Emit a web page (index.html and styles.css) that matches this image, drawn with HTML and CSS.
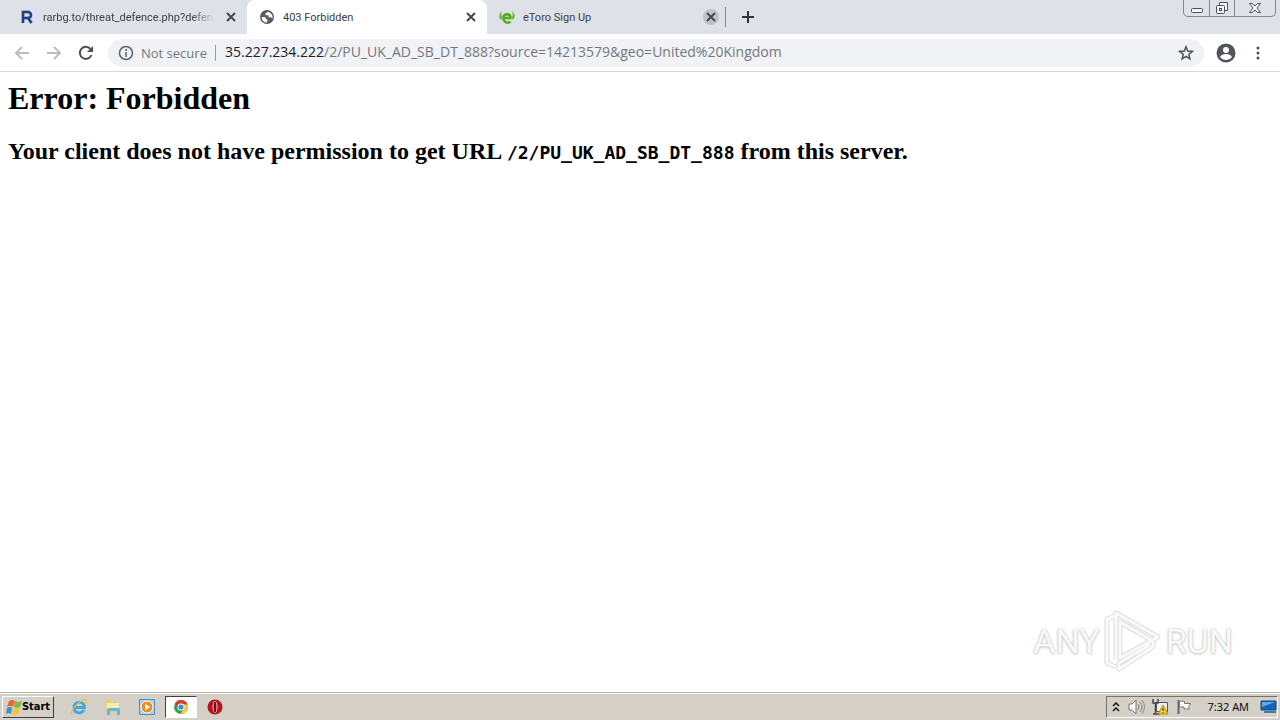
FILE: index.html
```html
<!DOCTYPE html>
<html lang="en">
<head>
<meta charset="utf-8">
<title>403 Forbidden</title>
<link rel="stylesheet" href="styles.css">
</head>
<body>
<header class="tabstrip">
  <div class="tab">
    <svg class="favicon" viewBox="0 0 16 16"><path d="M4 14V3h5a3 3 0 0 1 0 6H5m4 0 4 5" fill="none" stroke="#b8d2f2" stroke-width="4"/><path d="M4 14V3h5a3 3 0 0 1 0 6H5m4 0 3.500 5" fill="none" stroke="#263f7a" stroke-width="2.500"/></svg>
    <span class="tab-title faded">rarbg.to/threat_defence.php?defen</span>
    <button class="close" aria-label="Close tab"><svg viewBox="0 0 16 16"><path d="m4 4 8 8m0-8-8 8"/></svg></button>
  </div>
  <div class="tab active">
    <svg class="favicon" viewBox="0 0 16 16"><circle cx="8" cy="8" r="7" fill="#575b60"/><path d="M2.500 8.500c2-.8 4-.5 4.500 1 .5 1 1.500.6 1.500 2L8 13.500C5 13.500 3 11.500 2.500 8.500zM9 2.800 6.500 4.500v1.800h3v2h2.500l1.500 1.500c.5-3-.8-5.800-4.500-7z" fill="#fff"/></svg>
    <span class="tab-title">403 Forbidden</span>
    <button class="close" aria-label="Close tab"><svg viewBox="0 0 16 16"><path d="m4 4 8 8m0-8-8 8"/></svg></button>
  </div>
  <div class="tab">
    <svg class="favicon" viewBox="0 0 16 16"><path d="M3 2C-.5 5-.5 9 2.500 11L3 8C2 6 2 4 3 2zM13 2c3.500 3 3.500 7 .5 9L13 8c1-2 1-4 0-6z" fill="#68b52b"/><path d="M4.500 9h7c0-5-7-5-7 0 0 5 4.500 5.500 7 3.500" fill="none" stroke="#58aa21" stroke-width="2.500"/></svg>
    <span class="tab-title">eToro Sign Up</span>
    <button class="close round" aria-label="Close tab"><svg viewBox="0 0 16 16"><path d="m4 4 8 8m0-8-8 8"/></svg></button>
  </div>
  <button class="new-tab" aria-label="New tab"><svg viewBox="0 0 16 16"><path d="M8 2v12M2 8h12"/></svg></button>
  <div class="window-buttons">
    <button aria-label="Minimize"><svg viewBox="0 0 16 16"><rect x="2.500" y="8.500" width="11" height="4" rx="1"/></svg></button>
    <button aria-label="Restore"><svg viewBox="0 0 16 16"><path d="M5.500 5.500v-3h8v8h-3"/><rect x="2.500" y="5.500" width="8" height="8" rx="1"/><rect x="5.500" y="8.500" width="2" height="2"/></svg></button>
    <button class="wide" aria-label="Close window"><svg viewBox="0 0 16 16"><path d="M2.500 3.500h3L8 6l2.500-2.500h3L10 8l3.500 4.500h-3L8 10l-2.500 2.500h-3L6 8z"/></svg></button>
  </div>
</header>
<nav class="toolbar">
  <button class="nav off" aria-label="Back"><svg viewBox="0 0 16 16"><path d="M15 8H2m6-6L2 8l6 6"/></svg></button>
  <button class="nav off" aria-label="Forward"><svg viewBox="0 0 16 16"><path d="M1 8h13M8 2l6 6-6 6"/></svg></button>
  <button class="nav" aria-label="Reload"><svg viewBox="0 0 16 16"><path d="M13.500 10A6 6 0 1 1 12.500 4"/><path class="solid" d="M15 1v6H9z"/></svg></button>
  <div class="omnibox">
    <svg class="info" viewBox="0 0 16 16"><circle cx="8" cy="8" r="6.500"/><path d="M8 7v5M8 4v2"/></svg>
    <span class="secure">Not secure</span>
    <span class="url"><b>35.227.234.222</b>/2/PU_UK_AD_SB_DT_888?source=14213579&amp;geo=United%20Kingdom</span>
    <button class="star" aria-label="Bookmark this page"><svg viewBox="0 0 16 16"><path d="m8 1.800 1.700 4.200 4.600.4-3.500 3 1.100 4.400L8 11.400l-3.900 2.400 1.100-4.400-3.500-3 4.600-.4z"/></svg></button>
  </div>
  <button class="profile" aria-label="Profile"><svg viewBox="0 0 20 20"><circle cx="10" cy="10" r="9.500" fill="#51555b"/><circle cx="10" cy="7" r="3" fill="#fff"/><path d="M4 14c1.500-4 10.500-4 12 0-3 4-9 4-12 0z" fill="#fff"/></svg></button>
  <button class="menu" aria-label="Menu"><svg viewBox="0 0 16 16"><circle cx="8" cy="3" r="1.500"/><circle cx="8" cy="8" r="1.500"/><circle cx="8" cy="13" r="1.500"/></svg></button>
</nav>
<main class="page">
  <h1>Error: Forbidden</h1>
  <h2>Your client does not have permission to get URL <code>/2/PU_UK_AD_SB_DT_888</code> from this server.</h2>
  <div class="watermark">
    <span>ANY</span>
    <svg viewBox="0 0 58 64"><g fill="none" stroke-linejoin="round"><path d="M11 7 3 10v44l9 4M12 51V4l42 24-38 21M16 49V13l33 19v6L15 60v-6l31-18" stroke="#dcdcdc" stroke-width="5"/><path d="M11 7 3 10v44l9 4M12 51V4l42 24-38 21M16 49V13l33 19v6L15 60v-6l31-18" stroke="#fafafa" stroke-width="3"/></g></svg>
    <span>RUN</span>
  </div>
</main>
<footer class="taskbar">
  <button class="start"><svg viewBox="0 0 16 16"><path d="M3 2q3-2 6 0L7 8Q4 6 1 8z" fill="#ed682b"/><path d="M9 2q3 2 7 0l-2 6q-3 2-6 0z" fill="#7dba3e"/><path d="M1 9q3-2 5 0l-1 6q-3-2-5 0z" fill="#3c8fd5"/><path d="M7 9q3 2 7 0l-2 6q-3 2-6 0z" fill="#f7c530"/></svg>Start</button>
  <div class="apps">
    <button aria-label="Internet Explorer"><svg viewBox="0 0 18 18"><path d="M5 9.500h9.500c0-7-10.500-7-10.500 0 0 6 7 7 10 2.500" fill="none" stroke="#3fa8e4" stroke-width="2.800"/><path d="M2 16C-1 13 12 0 16 2c1 .6.500 2.500-.5 4" fill="none" stroke="#e6bd45" stroke-width="1.300"/></svg></button>
    <button aria-label="Explorer"><svg viewBox="0 0 18 18"><path d="M2 2h5l1 2h8v10H2z" fill="#e9cf72"/><path d="M3 5h12v7H3z" fill="#f8edb5"/><path d="M3 17v-5q0-2 2-2h9q2 0 2 2v5h-3v-4H6v4z" fill="#65b6dc"/></svg></button>
    <button aria-label="Media Player"><svg viewBox="0 0 18 18"><path d="M1.500 1.500h15v15h-15z" fill="#a7d0ef" stroke="#4e91c9"/><circle cx="9" cy="9" r="6" fill="#f28a1c" stroke="#fff"/><path d="m7 5.500 5 3.500-5 3.500z" fill="#fff"/></svg></button>
    <button class="current" aria-label="Chrome"><svg viewBox="0 0 18 18"><circle cx="9" cy="9" r="7" fill="#35a253"/><path d="M3 5.500a7 7 0 0 1 12.500 1H9L6 10z" fill="#de3b30"/><path d="M15.500 6.500A7 7 0 0 1 8.500 16L12 10 9 6.500z" fill="#f8cb34"/><circle cx="9" cy="9" r="3.500" fill="#fff"/><circle cx="9" cy="9" r="2.600" fill="#4285d5"/></svg></button>
    <button aria-label="Opera"><svg viewBox="0 0 18 18"><circle cx="9" cy="9" r="7.500" fill="#b5121b"/><ellipse cx="9" cy="9" rx="2.500" ry="6" fill="#f2dcdc"/><ellipse cx="9" cy="9" rx="1.500" ry="5.500" fill="#7c090e"/></svg></button>
  </div>
  <div class="tray">
    <svg class="chevron" viewBox="0 0 10 16"><path d="m2 7 3-3 3 3M2 12l3-3 3 3" fill="none" stroke="#111" stroke-width="1.500"/></svg>
    <svg viewBox="0 0 18 18"><path d="M2 6h3l4-4v14l-4-4H2z" fill="#f8f8f8" stroke="#777"/><path d="M11 6q2 3 0 6m2-8q4 5 0 10m2-12q5 7 0 14" fill="none" stroke="#888"/></svg>
    <svg viewBox="0 0 18 18"><path d="M5.500 4.500h11v9h-11z" fill="#eee" stroke="#555"/><path d="M2 1v4h5V1M4.500 5v11M2 16h7" fill="none" stroke="#444" stroke-width="1.500"/><path d="m12 7 5 9H7z" fill="#ffd21c" stroke="#b7870b"/><path d="M12 10v3m0 1v1" stroke="#222"/></svg>
    <svg viewBox="0 0 18 18"><path d="M3.500 2v14" stroke="#666" stroke-width="2"/><path d="M4.500 3.500q3-1 5 0v2h6l-2 3 1 2.500H9V9H4.500z" fill="#fafafa" stroke="#777"/></svg>
    <time>7:32 AM</time>
    <svg viewBox="0 0 18 18"><path d="M2 3h15v9H2z" fill="#1264b8" stroke="#154680"/><path d="m3 4 13 0-13 5z" fill="#62a8e5"/><path d="M5 14h12" stroke="#477baa" stroke-width="2"/></svg>
  </div>
</footer>
</body>
</html>
```
FILE: styles.css
```css
* { box-sizing: border-box; }
body { margin: 0; min-height: 100vh; display: flex; flex-direction: column; background: #fff; font-family: "Open Sans", "Noto Sans", sans-serif; }
button { padding: 0; border: 0; background: none; font: inherit; color: inherit; display: flex; align-items: center; justify-content: center; }
svg { display: block; flex: none; width: 16px; height: 16px; }

.tabstrip { height: 34px; display: flex; background: #dee1e8; color: #3c4043; font-family: Roboto, sans-serif; font-size: 11px; padding-left: 7px; }
.tab { flex: 0 1 240px; min-width: 0; display: flex; align-items: center; gap: 8px; padding: 0 8px 0 12px; }
.tab.active { background: #fff; border-radius: 8px 8px 0 0; }
.tab-title { flex: 1; min-width: 0; overflow: hidden; white-space: nowrap; }
.faded { mask-image: linear-gradient(to right, #000 86%, transparent); }
.close { width: 16px; height: 16px; border-radius: 50%; stroke: #45494e; stroke-width: 2; }
.close.round { background: #bfc2c8; }
.new-tab { width: 44px; height: 20px; align-self: center; border-left: 1px solid #85888e; margin-left: -2px; stroke: #303338; stroke-width: 2; }
.window-buttons { height: 17px; margin: 0 4px 0 auto; display: flex; border: 1px solid #84878e; border-top: 0; border-radius: 0 0 5px 5px; }
.window-buttons button { width: 25px; }
.window-buttons button + button { border-left: 1px solid #84878e; }
.window-buttons .wide { width: 41px; }
.window-buttons svg { fill: #f5f5f7; stroke: #4c5058; }

.toolbar { height: 38px; display: flex; align-items: center; padding: 0 14px; border-bottom: 1px solid #d7d8da; }
.nav { width: 16px; margin-right: 16px; fill: none; stroke: #4d5156; stroke-width: 2; }
.nav.off { stroke: #babcbe; }
.solid { fill: #4d5156; stroke: none; }
.omnibox { flex: 1; min-width: 0; height: 28px; display: flex; align-items: center; padding: 0 10px; margin-right: 12px; margin-left: -2px; border-radius: 14px; background: #f0f2f5; font-size: 13px; color: #74787d; white-space: nowrap; }
.info { fill: none; stroke: #5f6368; stroke-width: 1.5; }
.secure { margin-left: 7px; padding-right: 8px; border-right: 1px solid #999ca0; line-height: 16px; }
.url { flex: 1; min-width: 0; overflow: hidden; margin-left: 9px; font-size: 14px; line-height: 20px; padding-bottom: 2px; }
.url b { font-weight: 400; color: #202124; }
.star { fill: none; stroke: #4d5156; stroke-width: 1.5; }
.profile svg { width: 20px; height: 20px; }
.menu { margin-left: 14px; fill: #4d5156; }

.page { flex: 1; position: relative; padding: 8px; color: #000; font-family: "Liberation Serif", serif; }
h1 { margin: 0 0 20px; font-size: 32px; line-height: 37px; }
h2 { margin: 0; font-size: 24px; line-height: 28px; }
code { font-family: "DejaVu Sans Mono", monospace; font-size: 18px; }
.watermark { position: absolute; right: 47px; bottom: 19px; display: flex; align-items: center; gap: 4px; font: 34px/64px Roboto, sans-serif; color: #f8f8f8; text-shadow: 0 0 2px #bbb, 0 1px 3px #ccc; }
.watermark svg { width: 58px; height: 64px; }

.taskbar { height: 28px; display: flex; align-items: center; background: #d4d0c8; border-top: 1px solid #b7b4ad; padding: 2px; box-shadow: inset 0 1px #fff; color: #000; }
.start { width: 52px; height: 22px; border: 1px solid; border-color: #fff #404040 #404040 #fff; font: bold 11px "DejaVu Sans Condensed", sans-serif; }
.apps { display: flex; margin-left: 9px; gap: 2px; }
.apps button { width: 32px; height: 22px; }
.apps svg, .tray svg { width: 18px; height: 18px; }
.apps .current { background: #fff; border: 1px solid; border-color: #404040 #fff #fff #404040; }
.tray { height: 22px; margin-left: auto; display: flex; align-items: center; gap: 6px; padding-left: 4px; border: 1px solid; border-color: #77736c #fff #fff #77736c; font-size: 11px; }
.tray .chevron { width: 10px; height: 16px; }
.tray time { margin: 0 4px 0 9px; }
```
